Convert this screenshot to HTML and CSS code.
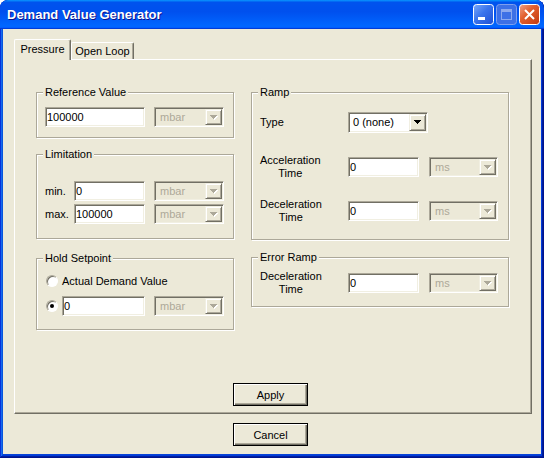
FILE: index.html
```html
<!DOCTYPE html>
<html>
<head>
<meta charset="utf-8">
<title>Demand Value Generator</title>
<link rel="stylesheet" href="styles.css">
</head>
<body>
<div class="window">
  <div class="titlebar">
    <span class="title">Demand Value Generator</span>
    <div class="tbbtns">
      <svg width="21" height="21" viewBox="0 0 21 21">
        <defs><linearGradient id="gmin" x1="0" y1="0" x2="1" y2="1"><stop offset="0" stop-color="#7AA8FA"/><stop offset="0.45" stop-color="#3A74EC"/><stop offset="1" stop-color="#1F4FD4"/></linearGradient></defs>
        <rect x="0.5" y="0.5" width="20" height="20" rx="3" fill="url(#gmin)" stroke="#fff"/>
        <rect x="5" y="13" width="7" height="3" fill="#fff"/>
      </svg>
      <svg width="21" height="21" viewBox="0 0 21 21">
        <rect x="0.5" y="0.5" width="20" height="20" rx="3" fill="#3D70E6" stroke="#7E9FEE"/>
        <rect x="5.5" y="5.5" width="10" height="10" fill="none" stroke="#8CA9EE"/>
        <rect x="5" y="5" width="11" height="3" fill="#8CA9EE"/>
      </svg>
      <svg width="21" height="21" viewBox="0 0 21 21">
        <defs><linearGradient id="gcl" x1="0" y1="0" x2="1" y2="1"><stop offset="0" stop-color="#F0A288"/><stop offset="0.4" stop-color="#E2602F"/><stop offset="1" stop-color="#C2380F"/></linearGradient></defs>
        <rect x="0.5" y="0.5" width="20" height="20" rx="3" fill="url(#gcl)" stroke="#fff"/>
        <path d="M6 6L15 15M15 6L6 15" stroke="#fff" stroke-width="2"/>
      </svg>
    </div>
  </div>

  <div class="tabs">
    <div class="tab sel">Pressure</div>
    <div class="tab other">Open Loop</div>
  </div>

  <div class="panel">
    <div class="cols">
      <div class="col left">
        <div class="group g-ref">
          <div class="gtitle">Reference Value</div>
          <div class="row r-ref">
            <input class="edit w100" type="text" value="100000">
            <div class="combo dis w70"><span class="txt">mbar</span><span class="dd"><svg width="8" height="5" viewBox="0 0 8 5"><path class="hl" d="M1 1h7v1h-1v1h-1v1h-1v1h-1v-1h-1v-1h-1v-1h-1z"/><path class="ar" d="M0 0h7v1h-1v1h-1v1h-1v1h-1v-1h-1v-1h-1v-1h-1z"/></svg></span></div>
          </div>
        </div>

        <div class="group g-lim">
          <div class="gtitle">Limitation</div>
          <div class="row r-min">
            <span class="llbl">min.</span>
            <input class="edit w71" type="text" value="0">
            <div class="combo dis w70"><span class="txt">mbar</span><span class="dd"><svg width="8" height="5" viewBox="0 0 8 5"><path class="hl" d="M1 1h7v1h-1v1h-1v1h-1v1h-1v-1h-1v-1h-1v-1h-1z"/><path class="ar" d="M0 0h7v1h-1v1h-1v1h-1v1h-1v-1h-1v-1h-1v-1h-1z"/></svg></span></div>
          </div>
          <div class="row r-max">
            <span class="llbl">max.</span>
            <input class="edit w71" type="text" value="100000">
            <div class="combo dis w70"><span class="txt">mbar</span><span class="dd"><svg width="8" height="5" viewBox="0 0 8 5"><path class="hl" d="M1 1h7v1h-1v1h-1v1h-1v1h-1v-1h-1v-1h-1v-1h-1z"/><path class="ar" d="M0 0h7v1h-1v1h-1v1h-1v1h-1v-1h-1v-1h-1v-1h-1z"/></svg></span></div>
          </div>
        </div>

        <div class="group g-hold">
          <div class="gtitle">Hold Setpoint</div>
          <div class="row r-rad1">
            <span class="radio"></span>
            <span>Actual Demand Value</span>
          </div>
          <div class="row r-rad2">
            <span class="radio on"></span>
            <input class="edit w83" type="text" value="0">
            <div class="combo dis w70"><span class="txt">mbar</span><span class="dd"><svg width="8" height="5" viewBox="0 0 8 5"><path class="hl" d="M1 1h7v1h-1v1h-1v1h-1v1h-1v-1h-1v-1h-1v-1h-1z"/><path class="ar" d="M0 0h7v1h-1v1h-1v1h-1v1h-1v-1h-1v-1h-1v-1h-1z"/></svg></span></div>
          </div>
        </div>
      </div>

      <div class="col right">
        <div class="group g-ramp">
          <div class="gtitle">Ramp</div>
          <div class="row r-type">
            <span class="rlbl"><span class="lbl2">Type</span></span>
            <div class="combo en type"><span class="txt">0 (none)</span><span class="dd"><svg width="8" height="5" viewBox="0 0 8 5"><path class="ar" d="M0 0h7v1h-1v1h-1v1h-1v1h-1v-1h-1v-1h-1v-1h-1z"/></svg></span></div>
          </div>
          <div class="row r-acc">
            <span class="rlbl"><span class="lbl2">Acceleration<br>Time</span></span>
            <input class="edit w71" type="text" value="0">
            <div class="combo dis w69"><span class="txt">ms</span><span class="dd"><svg width="8" height="5" viewBox="0 0 8 5"><path class="hl" d="M1 1h7v1h-1v1h-1v1h-1v1h-1v-1h-1v-1h-1v-1h-1z"/><path class="ar" d="M0 0h7v1h-1v1h-1v1h-1v1h-1v-1h-1v-1h-1v-1h-1z"/></svg></span></div>
          </div>
          <div class="row r-dec">
            <span class="rlbl"><span class="lbl2">Deceleration<br>Time</span></span>
            <input class="edit w71" type="text" value="0">
            <div class="combo dis w69"><span class="txt">ms</span><span class="dd"><svg width="8" height="5" viewBox="0 0 8 5"><path class="hl" d="M1 1h7v1h-1v1h-1v1h-1v1h-1v-1h-1v-1h-1v-1h-1z"/><path class="ar" d="M0 0h7v1h-1v1h-1v1h-1v1h-1v-1h-1v-1h-1v-1h-1z"/></svg></span></div>
          </div>
        </div>

        <div class="group g-err">
          <div class="gtitle">Error Ramp</div>
          <div class="row r-err">
            <span class="rlbl"><span class="lbl2">Deceleration<br>Time</span></span>
            <input class="edit w71" type="text" value="0">
            <div class="combo dis w69"><span class="txt">ms</span><span class="dd"><svg width="8" height="5" viewBox="0 0 8 5"><path class="hl" d="M1 1h7v1h-1v1h-1v1h-1v1h-1v-1h-1v-1h-1v-1h-1z"/><path class="ar" d="M0 0h7v1h-1v1h-1v1h-1v1h-1v-1h-1v-1h-1v-1h-1z"/></svg></span></div>
          </div>
        </div>
      </div>
    </div>
    <button class="btn apply" type="button">Apply</button>
  </div>

  <button class="btn cancel" type="button">Cancel</button>
</div>
</body>
</html>
```

FILE: styles.css
```css
* { box-sizing: border-box; }
html, body { margin: 0; padding: 0; }
body {
  width: 544px;
  height: 458px;
  overflow: hidden;
  background: #ffffff;
  font-family: "Liberation Sans", Arial, sans-serif;
  font-size: 11px;
  color: #000;
}

.window {
  width: 544px;
  height: 458px;
  background: #ECE9D8;
  border-radius: 8px 8px 0 0;
  padding: 0 3px 4px;
  overflow: hidden;
  box-shadow:
    inset -1px -1px #00138c,
    inset 1px 1px #0831d9,
    inset -2px -2px #001ea0,
    inset 2px 2px #166aee,
    inset -3px -3px #003bda,
    inset 3px 3px #0855dd,
    inset 0 -4px #0843d6;
}

.titlebar {
  margin: 0 -3px;
  height: 29px;
  display: flex;
  align-items: center;
  padding: 0 4px 0 7px;
  border-radius: 8px 8px 0 0;
  background: linear-gradient(180deg, #0997ff, #0053ee 8%, #0050ee 40%, #0066ff 88%, #0066ff 93%, #005bff 95%, #003dd7 96%, #003dd7);
}
.title {
  flex: 1;
  color: #fff;
  font-weight: bold;
  font-size: 13px;
  line-height: 16px;
  text-shadow: 1px 1px #0f1089;
  font-family: "Liberation Sans", Arial, sans-serif;
}
.tbbtns { display: flex; gap: 2px; }
.tbbtns svg { display: block; }

.tabs {
  display: flex;
  align-items: flex-end;
  height: 30px;
  margin-left: 11px;
}
.tab {
  background: #ECE9D8;
  border-top: 1px solid #fff;
  border-left: 1px solid #fff;
  border-right: 1px solid #716F64;
  box-shadow: inset -1px 0 #ACA899;
  border-radius: 2px 2px 0 0;
  text-align: center;
  line-height: 13px;
}
.tab.sel {
  width: 57px;
  height: 21px;
  padding-top: 3px;
  margin-bottom: -1px;
  position: relative;
  z-index: 1;
}
.tab.other {
  width: 63px;
  height: 17px;
  padding-top: 2px;
}

.panel {
  margin-left: 11px;
  width: 518px;
  height: 355px;
  border-top: 1px solid #fff;
  border-left: 1px solid #fff;
  border-right: 1px solid #716F64;
  border-bottom: 1px solid #716F64;
  box-shadow: inset -1px -1px #ACA899;
  padding: 32px 0 0 21px;
}

.cols { display: flex; gap: 17px; align-items: flex-start; }
.col { display: flex; flex-direction: column; }
.left { width: 198px; }
.right { width: 258px; }

.group {
  border: 1px solid #ACA899;
  box-shadow: inset 1px 1px #fff, 1px 1px #fff;
  padding: 0 9px 0 8px;
}
.gtitle {
  margin: -7px 0 0 -2px;
  padding: 0 2px;
  background: #ECE9D8;
  width: max-content;
  height: 13px;
  line-height: 13px;
  position: relative;
}

.g-ref { padding-bottom: 10px; }
.g-lim { margin-top: 16px; padding-bottom: 14px; }
.g-hold { margin-top: 19px; padding-bottom: 13px; }
.g-ramp { padding-bottom: 15px; }
.g-err { margin-top: 17px; padding-bottom: 10px; }

.row { display: flex; align-items: center; }
.r-ref { margin-top: 8px; }
.r-min { margin-top: 20px; }
.r-max { margin-top: 3px; }
.r-rad1 { margin-top: 8px; height: 16px; }
.r-rad2 { margin-top: 7px; }
.r-type { margin-top: 13px; }
.r-acc { margin-top: 21px; }
.r-dec { margin-top: 18px; }
.r-err { margin-top: 6px; }

.llbl { width: 29px; flex: none; }
.rlbl { width: 88px; flex: none; }
.lbl2 { display: inline-block; text-align: center; line-height: 13px; }

.edit {
  height: 20px;
  margin: 0;
  border: 1px solid;
  border-color: #ACA899 #fff #fff #ACA899;
  box-shadow: inset 1px 1px #716F64, inset -1px -1px #F1EFE2;
  background: #fff;
  font-family: "Liberation Sans", Arial, sans-serif;
  font-size: 11px;
  color: #000;
  padding: 0 0 0 1px;
  outline: none;
  flex: none;
}
.w100 { width: 100px; }
.w71 { width: 71px; }
.w83 { width: 83px; }

.combo {
  height: 20px;
  display: flex;
  align-items: center;
  border: 1px solid;
  border-color: #ACA899 #fff #fff #ACA899;
  box-shadow: inset 1px 1px #716F64, inset -1px -1px #F1EFE2;
  padding: 1px;
  margin-left: 9px;
  flex: none;
}
.r-acc .combo, .r-dec .combo, .r-err .combo { margin-left: 10px; }
.w70 { width: 70px; }
.w69 { width: 69px; }
.combo .txt { flex: 1; padding-left: 4px; line-height: 13px; }
.combo.dis { background: #ECE9D8; color: #ACA899; }
.combo.en { background: #fff; }
.combo.type { width: 80px; height: 21px; margin-left: 0; }
.combo.type .txt { padding-left: 3px; }

.dd {
  width: 17px;
  height: 16px;
  background: #ECE9D8;
  border: 1px solid;
  border-color: #F1EFE2 #716F64 #716F64 #F1EFE2;
  box-shadow: inset 1px 1px #fff, inset -1px -1px #ACA899;
  display: flex;
  align-items: center;
  justify-content: center;
  flex: none;
}
.combo.type .dd { height: 17px; }
.dd svg { display: block; }
.dis .dd .ar { fill: #ACA899; }
.dis .dd .hl { fill: #fff; }
.en .dd .ar { fill: #000; }

.radio {
  width: 12px;
  height: 12px;
  border-radius: 50%;
  border: 1px solid;
  border-color: #ACA899 #fff #fff #ACA899;
  box-shadow: inset 1px 1px #716F64;
  background: #fff;
  margin-left: 1px;
  margin-right: 4px;
  flex: none;
  display: flex;
  align-items: center;
  justify-content: center;
}
.radio.on::after {
  content: "";
  width: 4px;
  height: 4px;
  border-radius: 50%;
  background: #000;
}

.btn {
  display: block;
  width: 75px;
  height: 23px;
  border: 1px solid #000;
  background: #ECE9D8;
  box-shadow: inset 1px 1px #fff, inset -1px -1px #716F64, inset -2px -2px #ACA899;
  font-family: "Liberation Sans", Arial, sans-serif;
  font-size: 11px;
  color: #000;
  padding: 0;
  border-radius: 0;
}
.apply { margin: 53px 0 0 197px; }
.cancel { margin: 9px 0 0 230px; }
```
